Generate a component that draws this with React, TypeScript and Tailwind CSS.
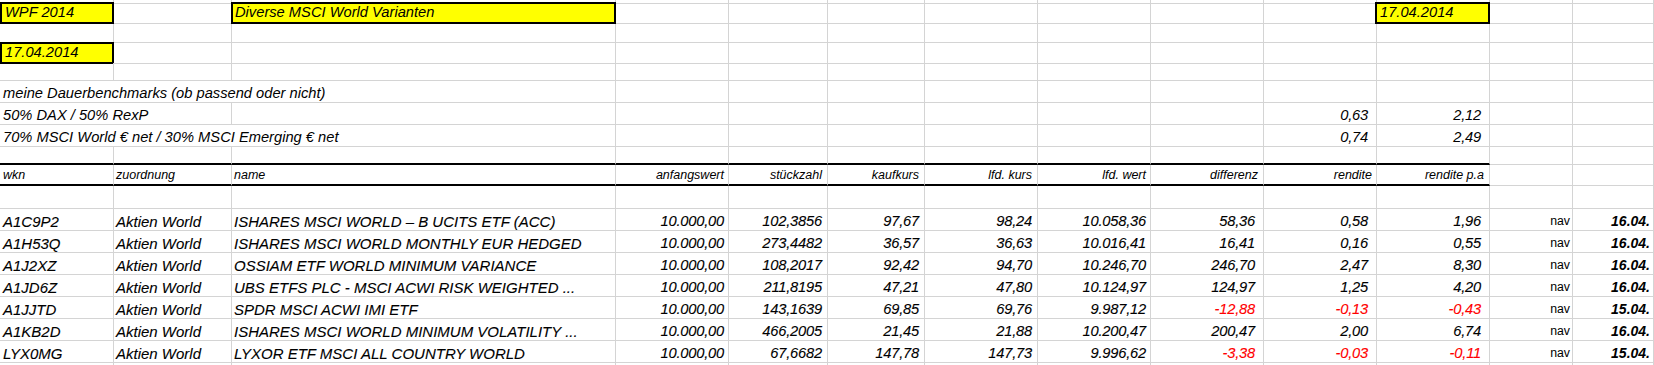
import React from 'react';

const COLS =
  'grid grid-cols-[114px_118px_384px_113px_99px_97px_113px_113px_113px_113px_113px_83px_81px]';
const G = 'border-r border-b border-[#d4d4d4]';
const THICK = 'border-r border-r-[#d4d4d4] border-b-2 border-b-black';
const BOX = 'border-2 border-black bg-[#ffff00]';

type Row = {
  wkn: string;
  name: string;
  start: string;
  qty: string;
  buy: string;
  cur: string;
  value: string;
  diff: string;
  ret: string;
  retPa: string;
  date: string;
};

const ROWS: Row[] = [
  { wkn: 'A1C9P2', name: 'ISHARES MSCI WORLD – B UCITS ETF (ACC)', start: '10.000,00', qty: '102,3856', buy: '97,67', cur: '98,24', value: '10.058,36', diff: '58,36', ret: '0,58', retPa: '1,96', date: '16.04.' },
  { wkn: 'A1H53Q', name: 'ISHARES MSCI WORLD MONTHLY EUR HEDGED', start: '10.000,00', qty: '273,4482', buy: '36,57', cur: '36,63', value: '10.016,41', diff: '16,41', ret: '0,16', retPa: '0,55', date: '16.04.' },
  { wkn: 'A1J2XZ', name: 'OSSIAM ETF WORLD MINIMUM VARIANCE', start: '10.000,00', qty: '108,2017', buy: '92,42', cur: '94,70', value: '10.246,70', diff: '246,70', ret: '2,47', retPa: '8,30', date: '16.04.' },
  { wkn: 'A1JD6Z', name: 'UBS ETFS PLC - MSCI ACWI RISK WEIGHTED ...', start: '10.000,00', qty: '211,8195', buy: '47,21', cur: '47,80', value: '10.124,97', diff: '124,97', ret: '1,25', retPa: '4,20', date: '16.04.' },
  { wkn: 'A1JJTD', name: 'SPDR MSCI ACWI IMI ETF', start: '10.000,00', qty: '143,1639', buy: '69,85', cur: '69,76', value: '9.987,12', diff: '-12,88', ret: '-0,13', retPa: '-0,43', date: '15.04.' },
  { wkn: 'A1KB2D', name: 'ISHARES MSCI WORLD MINIMUM VOLATILITY ...', start: '10.000,00', qty: '466,2005', buy: '21,45', cur: '21,88', value: '10.200,47', diff: '200,47', ret: '2,00', retPa: '6,74', date: '16.04.' },
  { wkn: 'LYX0MG', name: 'LYXOR ETF MSCI ALL COUNTRY WORLD', start: '10.000,00', qty: '67,6682', buy: '147,78', cur: '147,73', value: '9.996,62', diff: '-3,38', ret: '-0,03', retPa: '-0,11', date: '15.04.' },
];

function Cell({
  children,
  className = '',
  upright = false,
}: {
  children?: React.ReactNode;
  className?: string;
  upright?: boolean;
}) {
  return (
    <div
      className={`flex min-w-0 items-end whitespace-nowrap leading-[17px] ${upright ? 'not-italic' : 'italic'} ${className}`}
    >
      {children}
    </div>
  );
}

// empty grid row, every cell just gridlines
function Blank({ h }: { h: string }) {
  return (
    <div className={`${COLS} ${h}`}>
      {Array.from({ length: 13 }).map((_, i) => (
        <Cell key={i} className={G} />
      ))}
    </div>
  );
}

export default function App() {
  const txt = `${G} pl-[2px] text-[15px]`;
  const num = `${G} justify-end pr-[4px] tracking-[-0.2px]`;
  const num5 = `${G} justify-end pr-[5px] tracking-[-0.2px]`;
  const num8 = `${G} justify-end pr-[8px] tracking-[-0.2px]`;
  const red = (v: string) => (v.startsWith('-') ? 'text-[#ff0000]' : 'text-black');

  return (
    <div className="h-[365px] w-[1654px] overflow-hidden bg-white font-['Liberation_Sans',Arial,sans-serif] text-[14.7px] text-black">
      <Blank h="h-[4px]" />

      {/* title row */}
      <div className={`${COLS} h-[20px]`}>
        <Cell className={`${BOX} -mt-[2px] pl-[3px] pb-[1px]`}>WPF 2014</Cell>
        <Cell className={G} />
        <Cell className={`${BOX} -mt-[2px] -ml-px pl-[2px] pb-[1px]`}>Diverse MSCI World Varianten</Cell>
        {Array.from({ length: 7 }).map((_, i) => (
          <Cell key={i} className={G} />
        ))}
        <Cell className={`${BOX} -mt-[2px] -ml-[2px] pl-[3px] pb-[1px]`}>17.04.2014</Cell>
        <Cell className={G} />
        <Cell className={G} />
      </div>

      <Blank h="h-[19px]" />

      <div className={`${COLS} h-[20px]`}>
        <Cell className={`${BOX} -mt-px pl-[3px] pb-[1px]`}>17.04.2014</Cell>
        {Array.from({ length: 12 }).map((_, i) => (
          <Cell key={i} className={G} />
        ))}
      </div>

      <Blank h="h-[18px]" />

      {/* benchmarks */}
      <div className={`${COLS} h-[22px]`}>
        <Cell className={`${G} col-span-3 pl-[3px]`}>meine Dauerbenchmarks (ob passend oder nicht)</Cell>
        {Array.from({ length: 10 }).map((_, i) => (
          <Cell key={i} className={G} />
        ))}
      </div>
      <div className={`${COLS} h-[22px]`}>
        <Cell className={`${G} col-span-2 pl-[3px]`}>50% DAX / 50% RexP</Cell>
        {Array.from({ length: 7 }).map((_, i) => (
          <Cell key={i} className={G} />
        ))}
        <Cell className={num8}>0,63</Cell>
        <Cell className={num8}>2,12</Cell>
        <Cell className={G} />
        <Cell className={G} />
      </div>
      <div className={`${COLS} h-[22px]`}>
        <Cell className={`${G} col-span-3 pl-[3px]`}>70% MSCI World € net / 30% MSCI Emerging € net</Cell>
        {Array.from({ length: 6 }).map((_, i) => (
          <Cell key={i} className={G} />
        ))}
        <Cell className={num8}>0,74</Cell>
        <Cell className={num8}>2,49</Cell>
        <Cell className={G} />
        <Cell className={G} />
      </div>

      <div className={`${COLS} h-[18px]`}>
        {Array.from({ length: 11 }).map((_, i) => (
          <Cell key={i} className={THICK} />
        ))}
        <Cell className={G} />
        <Cell className={G} />
      </div>

      {/* column headers */}
      <div className={`${COLS} h-[21px] text-[12.5px]`}>
        <Cell className={`${THICK} pl-[3px]`}>wkn</Cell>
        <Cell className={`${THICK} pl-[2px]`}>zuordnung</Cell>
        <Cell className={`${THICK} pl-[2px]`}>name</Cell>
        <Cell className={`${THICK} justify-end pr-[4px]`}>anfangswert</Cell>
        <Cell className={`${THICK} justify-end pr-[5px]`}>stückzahl</Cell>
        <Cell className={`${THICK} justify-end pr-[5px]`}>kaufkurs</Cell>
        <Cell className={`${THICK} justify-end pr-[5px]`}>lfd. kurs</Cell>
        <Cell className={`${THICK} justify-end pr-[4px]`}>lfd. wert</Cell>
        <Cell className={`${THICK} justify-end pr-[5px]`}>differenz</Cell>
        <Cell className={`${THICK} justify-end pr-[4px]`}>rendite</Cell>
        <Cell className={`${THICK} justify-end pr-[5px]`}>rendite p.a</Cell>
        <Cell className={G} />
        <Cell className={G} />
      </div>

      <Blank h="h-[23px]" />

      {ROWS.map((r) => (
        <div key={r.wkn} className={`${COLS} h-[22px] [-webkit-text-stroke:0.1px_currentColor]`}>
          <Cell className={`${txt} pl-[3px]`}>{r.wkn}</Cell>
          <Cell className={txt}>Aktien World</Cell>
          <Cell className={txt}>{r.name}</Cell>
          <Cell className={num}>{r.start}</Cell>
          <Cell className={num5}>{r.qty}</Cell>
          <Cell className={num5}>{r.buy}</Cell>
          <Cell className={num5}>{r.cur}</Cell>
          <Cell className={num}>{r.value}</Cell>
          <Cell className={`${num8} ${red(r.diff)}`}>{r.diff}</Cell>
          <Cell className={`${num8} ${red(r.ret)}`}>{r.ret}</Cell>
          <Cell className={`${num8} ${red(r.retPa)}`}>{r.retPa}</Cell>
          <Cell upright className={`${G} justify-end pr-[2px] text-[12.3px] [-webkit-text-stroke:0px]`}>nav</Cell>
          <Cell className={`${G} justify-end pr-[3px] text-[14px] font-bold [-webkit-text-stroke:0px]`}>{r.date}</Cell>
        </div>
      ))}

      <Blank h="h-[22px]" />
    </div>
  );
}
